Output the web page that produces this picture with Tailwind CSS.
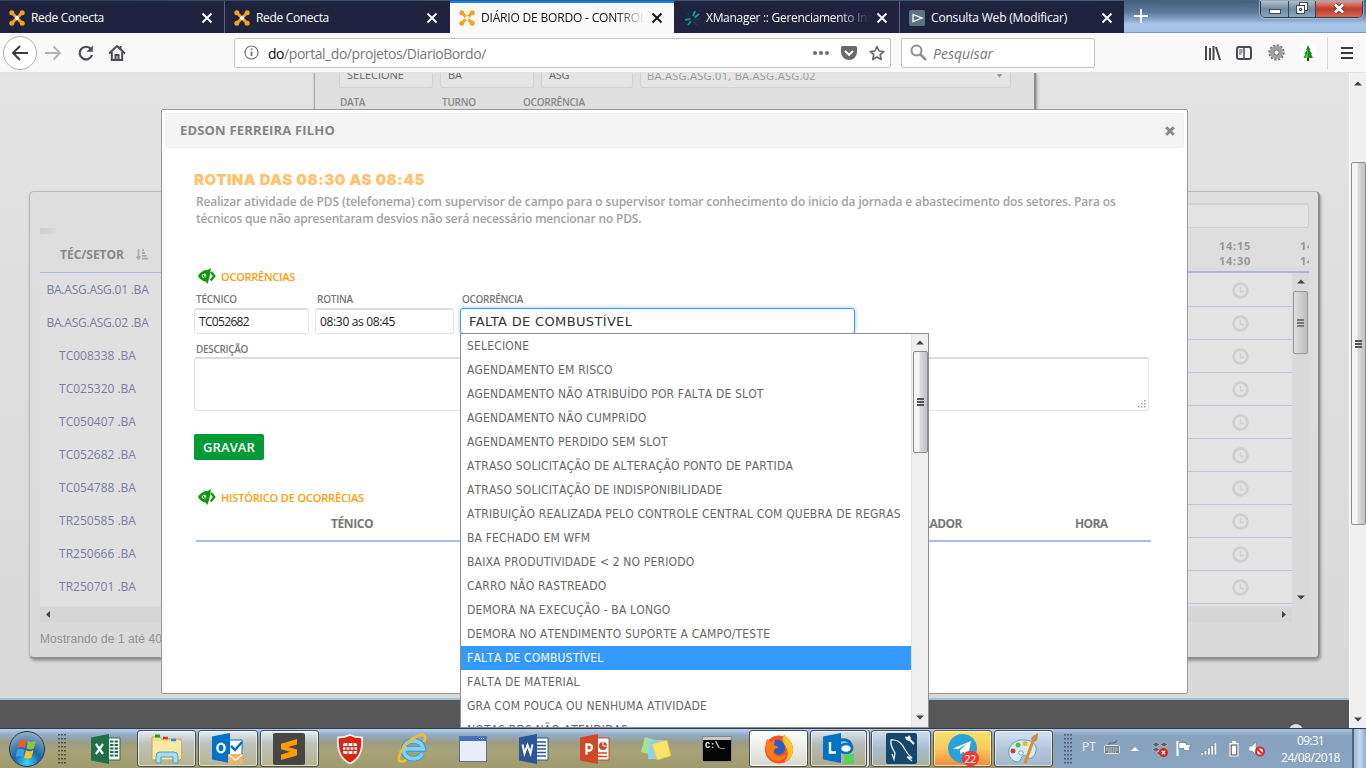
<!DOCTYPE html>
<html lang="pt-BR">
<head>
<meta charset="utf-8">
<title>DIÁRIO DE BORDO - CONTROLE</title>
<script src="https://cdn.jsdelivr.net/npm/@tailwindcss/browser@4"></script>
</head>
<body class="w-[1366px] h-[768px] overflow-hidden flex flex-col font-['Open_Sans',sans-serif] whitespace-nowrap bg-[#f9f9fa]">

<!-- shared symbols -->
<svg class="hidden">
  <symbol id="x" viewBox="0 0 16 16"><path d="M3.500 3.500l9 9M12.500 3.500l-9 9" stroke="currentColor" stroke-width="1.800" fill="none"/></symbol>
  <symbol id="conecta" viewBox="0 0 16 16"><path d="M2.800 2.800l10.400 10.400M13.200 2.800L2.800 13.200" stroke="#f7a11a" stroke-width="3"/><g fill="#f7a11a"><circle cx="2.800" cy="2.800" r="2.500"/><circle cx="13.200" cy="2.800" r="2.500"/><circle cx="2.800" cy="13.200" r="2.500"/><circle cx="13.200" cy="13.200" r="2.500"/></g><circle cx="8" cy="8" r="2" fill="#fff"/></symbol>
  <symbol id="clock" viewBox="0 0 17 17"><circle cx="8.500" cy="8.500" r="7" fill="none" stroke="#cfcfcf" stroke-width="2.600"/><path d="M8.500 5v4.500h3" fill="none" stroke="#cfcfcf" stroke-width="1.400"/></symbol>
  <symbol id="eye" viewBox="0 0 18 16"><path d="M0 8C2.500 3.500 6.500 1.800 9.800 2L13 0 11.500 9 9.500 16 7.800 13.800C4 13 1.500 10.700 0 8z" fill="#0b9a0b"/><path d="M3.800 8c.6-1.800 2-2.600 3.300-2.100s1.600 2.400.5 3.900c-1.600.7-3.100-.1-3.800-1.800z" fill="#fff"/><path d="M5.300 7c.3 2 1.500 2.600 2.700 1.600" stroke="#0b9a0b" stroke-width="1.200" fill="none"/><path d="M13 4l3.300 4L12.700 12.500" stroke="#0b9a0b" stroke-width="2.300" fill="none"/></symbol>
  <symbol id="up" viewBox="0 0 8 5"><path d="M0 4.500L4 .5l4 4z" fill="#444"/></symbol>
  <symbol id="down" viewBox="0 0 8 5"><path d="M0 .5h8l-4 4z" fill="#444"/></symbol>
</svg>

<!-- tab strip -->
<header class="h-[33px] shrink-0 flex pt-px bg-[linear-gradient(90deg,#28405a,#3f5f70_40%,#39566a_60%,#4a6b8a)] text-[12px] text-white relative">
  <div class="w-[225px] bg-[#202340] border-r border-[#5d6073] flex items-center pl-[9px] pt-px"><svg class="size-4"><use href="#conecta"/></svg><span class="ml-1.5 w-[168px] tracking-[-0.33px]">Rede Conecta</span><svg class="size-4"><use href="#x"/></svg></div>
  <div class="w-[225px] bg-[#202340] flex items-center pl-[9px] pt-px"><svg class="size-4"><use href="#conecta"/></svg><span class="ml-1.5 w-[168px] tracking-[-0.33px]">Rede Conecta</span><svg class="size-4"><use href="#x"/></svg></div>
  <div class="w-[224px] bg-[#f9f9fa] border-t-2 border-[#0a84ff] text-[#111] flex items-center pl-[9px]"><svg class="size-4"><use href="#conecta"/></svg><span class="ml-1.5 w-[164px] mr-1 overflow-hidden tracking-[-0.18px] [mask-image:linear-gradient(90deg,#000_82%,transparent)]">DIÁRIO DE BORDO - CONTROLE</span><svg class="size-4"><use href="#x"/></svg></div>
  <div class="w-[226px] bg-[#202340] border-r border-[#5d6073] flex items-center pl-[10px] pt-px"><svg class="size-4" viewBox="0 0 16 16" fill="none" stroke-width="2"><path d="M9 6l2-5M10.500 7.500L15 4" stroke="#14a08c"/><path d="M10 9.500h5.500M9.500 11l3.500 4" stroke="#20384a"/><path d="M6.500 9L1 10M7 11l-3 4" stroke="#178a86"/><path d="M6 6.500L3.500 3" stroke="#20384a"/></svg><span class="ml-1.5 w-[164px] mr-1 overflow-hidden tracking-[-0.3px] [mask-image:linear-gradient(90deg,#000_80%,transparent)]">XManager :: Gerenciamento Integrado</span><svg class="size-4"><use href="#x"/></svg></div>
  <div class="w-[224px] bg-[#202340] flex items-center pl-[9px] pt-px"><svg class="size-4" viewBox="0 0 16 16"><rect width="16" height="16" rx="2" fill="#5c7386"/><path d="M4 4.500v7L13 8z" fill="none" stroke="#fff" stroke-width="1.300"/></svg><span class="ml-1.5 w-[168px] tracking-[-0.18px]">Consulta Web (Modificar)</span><svg class="size-4"><use href="#x"/></svg></div>
  <div class="flex-1 flex justify-between pl-[9px] pr-[3px] bg-[linear-gradient(180deg,#44627f_0%,#5b7899_35%,#86a5c8_60%,#a9c8ea_75%,#a3c3e6_100%)] border-b border-[#7f98b5]">
    <svg class="w-4 h-4 mt-[7px]" viewBox="0 0 16 16"><path d="M8 1v14M1 8h14" stroke="#fff" stroke-width="2"/></svg>
    <div class="flex h-[17px] rounded-b-[5px] border border-t-0 border-[#2b3c50] outline outline-[#c9d6e4]/60 overflow-hidden">
      <div class="w-[28px] bg-[linear-gradient(#aebdcb,#6f8aa3_50%,#8aa7c2)] border-r border-[#34485e] flex justify-center pt-[8px]"><svg class="w-3 h-[5px]" viewBox="0 0 12 5"><rect x=".5" y=".5" width="11" height="4" fill="#fff" stroke="#3c4a5c"/></svg></div>
      <div class="w-[27px] bg-[linear-gradient(#aebdcb,#6f8aa3_50%,#8aa7c2)] border-r border-[#34485e] flex justify-center pt-px"><svg class="w-3 h-3" viewBox="0 0 12 12" fill="#fff" stroke="#3c4a5c"><rect x="3.500" y=".5" width="8" height="8"/><rect x=".5" y="3.500" width="8" height="8"/><path d="M3.500 6.500h2v2h-2z"/></svg></div>
      <div class="w-[46px] bg-[linear-gradient(#dd9a8d,#c03a26_50%,#d8694f)] flex justify-center pt-[2px]"><svg class="w-3 h-[11px]" viewBox="0 0 12 11"><path d="M2 1.500l8 8M10 1.500l-8 8" stroke="#53363a" stroke-width="4.500"/><path d="M2 1.500l8 8M10 1.500l-8 8" stroke="#fff" stroke-width="2.800"/></svg></div>
    </div>
  </div>
</header>

<!-- navigation bar -->
<nav class="h-10 shrink-0 bg-[#f9f9fa] border-b border-[#e1e1e2] flex items-center text-[14px] text-[#4a4a4f]">
  <div class="ml-[3px] size-[34px] rounded-full border border-[#b1b1b3] bg-white flex items-center justify-center"><svg class="size-[18px]" viewBox="0 0 18 18" fill="none" stroke="#3a3a3e" stroke-width="2"><path d="M17 9H2M9 2L2 9l7 7"/></svg></div>
  <svg class="ml-[7px] size-[18px]" viewBox="0 0 18 18" fill="none" stroke="#b4b4b6" stroke-width="2"><path d="M1 9h15M9.500 2.500L16 9l-6.500 6.500"/></svg>
  <svg class="ml-[15px] size-[18px]" viewBox="0 0 18 18" fill="none" stroke="#4a4a4f" stroke-width="2.200"><path d="M14 5.200A6.300 6.300 0 1 0 15 11"/><path d="M15.800 1.500v6.300H9.500z" fill="#4a4a4f" stroke="none"/></svg>
  <svg class="ml-[13px] size-[18px]" viewBox="0 0 18 18" fill="none" stroke="#4a4a4f" stroke-width="2"><path d="M1 9.500L9 2l8 7.500M3.800 8v8h10.400V8"/><path d="M7.500 16v-5h3v5zM12.500 2v3" /></svg>
  <div class="ml-[108px] w-[657px] h-[30px] bg-white border border-[#c4c4c5] rounded-[2px] flex items-center pl-[9px] pr-[5px]">
    <svg class="size-[15px]" viewBox="0 0 15 15" fill="none" stroke="#737377" stroke-width="1.200"><circle cx="7.500" cy="7.500" r="6.500"/><path d="M7.500 6.500v4.500M7.500 3.500v1.600" stroke-width="1.700"/></svg>
    <span class="ml-[9px] mt-[2px] tracking-[-0.45px] text-[#77777a] flex-1"><span class="text-[#0c0c0d]">do</span>/portal_do/projetos/DiarioBordo/</span>
    <svg class="w-4 h-1" viewBox="0 0 16 4" fill="#6a6a6e"><circle cx="2" cy="2" r="2"/><circle cx="8" cy="2" r="2"/><circle cx="14" cy="2" r="2"/></svg>
    <svg class="ml-3 w-4 h-[14px]" viewBox="0 0 16 14"><path d="M1.500 0h13A1.500 1.500 0 0 1 16 1.500V6a8 8 0 0 1-16 0V1.500A1.500 1.500 0 0 1 1.500 0z" fill="#6a6a6e"/><path d="M4 5l4 3.800L12 5" fill="none" stroke="#fff" stroke-width="2"/></svg>
    <svg class="ml-3 size-4" viewBox="0 0 16 16"><path d="M8 1.500l2 4.500 4.800.5-3.600 3.200 1 4.800L8 12l-4.200 2.500 1-4.800L1.200 6.500 6 6z" fill="none" stroke="#6a6a6e" stroke-width="1.700" stroke-linejoin="round"/></svg>
  </div>
  <div class="ml-[10px] w-[194px] h-[30px] bg-white border border-[#c4c4c5] rounded-[2px] flex items-center pl-2">
    <svg class="size-[17px]" viewBox="0 0 17 17" fill="none" stroke="#8d8d90"><circle cx="6.500" cy="6.500" r="5" stroke-width="2"/><path d="M10 10l6 6" stroke-width="2.500"/></svg>
    <span class="ml-[6px] mt-[2px] italic text-[#77777a]">Pesquisar</span>
  </div>
  <svg class="ml-[110px] w-4 h-[14px]" viewBox="0 0 16 14" stroke="#4a4a4f" stroke-width="2" fill="none"><path d="M1 0v14M5 2v12M8.500 0v14M11 1l4 13"/></svg>
  <svg class="ml-[15px] w-4 h-[14px]" viewBox="0 0 16 14" fill="none" stroke="#4a4a4f"><rect x="1" y="1" width="14" height="12" rx="2" stroke-width="2"/><path d="M8 1v12" stroke-width="1.500"/><path d="M3 4h3.500M3 6h3.500M3 8h2.500"/></svg>
  <svg class="ml-4 size-[17px]" viewBox="0 0 17 17" fill="none"><circle cx="8.500" cy="8.500" r="7.200" stroke="#777" stroke-width="2" stroke-dasharray="2.200 1.570"/><circle cx="8.500" cy="8.500" r="4.800" stroke="#a0a0a0" stroke-width="4"/><circle cx="8.500" cy="8.500" r="2.600" stroke="#666"/></svg>
  <svg class="ml-[15px] size-4 bg-white" viewBox="0 0 16 16"><path d="M8 0l2.500 5H9.500l2.500 4H11l2 4H3.500L5.500 9H4.500L7 5H6z" fill="#128a12"/><path d="M8 1v12H4.500l2.500-5z" fill="#2dd32d"/><rect x="7" y="13" width="2" height="3" fill="#5a2d10"/></svg>
  <div class="ml-[11px] w-px h-8 bg-[#d7d7db]"></div>
  <svg class="ml-[13px] w-3 h-3" viewBox="0 0 12 12" stroke="#3a3a3e" stroke-width="2"><path d="M0 1h12M0 6h12M0 11h12"/></svg>
</nav>

<!-- viewport -->
<div class="h-[655px] shrink-0 flex overflow-hidden">
  <main class="w-[1349px] relative overflow-hidden bg-[linear-gradient(180deg,#e3e3e3,#d8d8d8)] flex flex-col">

    <!-- filter panel -->
    <section class="ml-[314px] w-[722px] h-[90px] shrink-0 border-x border-[#a9a9a9] border-r-2 border-r-[#8d8d8d] shadow-[1px_0_3px_rgba(0,0,0,.3)] bg-[#dfdfdf] pl-6 text-[11px] text-[#777]">
      <div class="flex gap-[7px] h-[15px] text-[#666]">
        <div class="w-[94px] h-[15px] border border-t-0 border-[#d2d2d2] rounded-b-[3px] bg-[#e4e4e4] pl-[7px] leading-[3px]">SELECIONE</div>
        <div class="w-[94px] h-[15px] border border-t-0 border-[#d2d2d2] rounded-b-[3px] bg-[#e4e4e4] pl-[7px] leading-[3px]">BA</div>
        <div class="w-[92px] h-[15px] border border-t-0 border-[#d2d2d2] rounded-b-[3px] bg-[#e4e4e4] pl-[7px] leading-[3px] tracking-[-0.2px]">ASG</div>
        <div class="w-[371px] h-[15px] border border-t-0 border-[#d2d2d2] rounded-b-[3px] bg-[#e4e4e4] pl-[6px] pr-2 leading-[5px] text-[#999] tracking-[0.31px] flex justify-between">BA.ASG.ASG.01, BA.ASG.ASG.02<svg class="w-[5px] h-1 mt-px"><path d="M0 0h5L2.500 4z" fill="#999"/></svg></div>
      </div>
      <div class="flex mt-[7px] pl-px text-[10px] font-semibold tracking-[-0.25px] text-[#888]"><span class="w-[102px]">DATA</span><span class="w-[81px]">TURNO</span><span>OCORRÊNCIA</span></div>
    </section>

    <!-- schedule card -->
    <section class="ml-[29px] mt-[28px] w-[1291px] h-[468px] shrink-0 rounded-[5px] border border-[#b9b9b9] border-r-2 border-b-2 border-r-[#8d8d8d] border-b-[#8d8d8d] shadow-[1px_2px_3px_rgba(0,0,0,.3)] bg-[linear-gradient(180deg,#dedede,#dadada)] pl-[10px] pr-[9px] flex flex-col text-[#888]">
      <div class="flex h-[415px]">
        <div class="w-[1000px] flex flex-col">
          <div class="mt-[36px] w-4 h-1.5 bg-[linear-gradient(90deg,#cfcfcf,#d9d9d9)]"></div>
          <div class="h-[39px] mt-0 border-b border-[#a9b6e4] flex items-center pl-5 pt-[3px] text-[12px] font-bold"><span>TÉC/SETOR</span><svg class="ml-3 w-3 h-[11px]" viewBox="0 0 12 11"><path d="M2.500 0v9M.5 7.500L2.500 10l2-2.500" stroke="#aaa" stroke-width="1.600" fill="none"/><path d="M6 1.200h2M6 4h3M6 6.800h4.500M6 9.600h6" stroke="#aaa" stroke-width="1.800"/></svg></div>
          <div id="setores" class="bg-[#e0e0e0] text-[12px] text-[#7b7ba3] w-[122px] h-[333px] flex flex-col"></div>
        </div>
        <div class="flex-1 flex flex-col">
          <div class="mt-[11px] h-[25px] rounded-[3px] border border-[#d0d0d0] border-t-2 bg-[#e3e3e3]"></div>
          <div class="h-[45px] border-b-2 border-[#a9b6e4] pt-[10px] pl-[179px] flex gap-[49px] overflow-hidden text-[11px] leading-[15px] font-bold tracking-[0.74px] text-[#999]"><span>14:15<br>14:30</span><span class="w-[9px] overflow-hidden">14:30<br>14:45</span></div>
          <div class="flex h-[333px]">
            <div id="relogios" class="flex-1 flex flex-col pt-px bg-[#e3e3e3]"></div>
            <div class="w-[17px] bg-[#d9d9d9] flex flex-col items-center pt-[6px]">
              <svg class="w-2 h-[5px]"><use href="#up"/></svg>
              <div class="mt-[7px] w-[15px] h-[63px] border border-[#999] rounded-[2px] bg-[linear-gradient(90deg,#dedede,#bdbdbd)] flex flex-col gap-px items-center justify-center"><i class="w-[7px] h-[2px] bg-[#777]"></i><i class="w-[7px] h-[2px] bg-[#777]"></i><i class="w-[7px] h-[2px] bg-[#777]"></i></div>
              <svg class="mt-[241px] w-2 h-[5px]"><use href="#down"/></svg>
            </div>
          </div>
        </div>
      </div>
      <div class="h-[15px] w-[1252px] bg-[#d6d6d6] flex items-center justify-between pl-1.5 pr-1.5"><svg class="w-1 h-[7px]"><path d="M4 0v7L0 3.500z" fill="#444"/></svg><svg class="w-1 h-[7px]"><path d="M0 0v7l4-3.500z" fill="#444"/></svg></div>
      <div class="mt-2 text-[12px] tracking-[0.09px] font-['Liberation_Sans',sans-serif] text-[#909090]">Mostrando de 1 até 40 de 40 registros</div>
    </section>

    <!-- footer -->
    <footer class="mt-[39px] flex-1 border-t-2 border-[#9dc0d8] bg-[#575757] flex justify-end pr-[46px] pt-[24px]"><div class="size-[14px] rounded-full bg-[#ddd]"></div></footer>

    <!-- modal window -->
    <div class="absolute left-[161px] top-[36px] w-[1027px] h-[585px] border border-[#999] rounded-[2px] bg-white">
      <div class="m-[3px] h-[35px] rounded-[2px] bg-[#f4f4f4] border border-[#f0f0f0] flex items-center justify-between pl-[14px] pr-[8px] text-[13px] font-bold tracking-[0.17px] text-[#858585]"><span>EDSON FERREIRA FILHO</span><svg class="w-[10px] h-[10px]" viewBox="0 0 10 10"><path d="M1.200 1.200l7.600 7.600M8.800 1.200L1.200 8.800" stroke="#888" stroke-width="3"/></svg></div>
      <div class="px-8">
        <h1 class="mt-[21px] h-[22px] leading-[22px] text-[15px] font-black tracking-[0.5px] text-[#fdc36c] font-['Inter',sans-serif]">ROTINA DAS 08:30 AS 08:45</h1>
        <p class="pl-[2px] mt-[2px] text-[12px] leading-[17px] font-semibold text-[#a2a2a2] tracking-[-0.13px]">Realizar atividade de PDS (telefonema) com supervisor de campo para o supervisor tomar conhecimento do inicio da jornada e abastecimento dos setores. Para os<br><span class="tracking-[-0.2px]">técnicos que não apresentaram desvios não será necessário mencionar no PDS.</span></p>
        <h2 class="mt-[41px] h-4 flex items-center gap-[5px] pl-[4px] text-[11px] font-semibold tracking-[-0.25px] text-[#ff9c0a]"><svg class="w-[18px] h-4"><use href="#eye"/></svg><span class="pt-[2px]">OCORRÊNCIAS</span></h2>
        <div class="mt-[9px] flex gap-[6px] text-[12px] text-[#222]">
          <label class="w-[115px]"><span class="block h-[15px] leading-[13px] pl-[2px] text-[10px] font-semibold tracking-[-0.24px] text-[#777]">TÉCNICO</span><span class="flex items-center h-[26px] border border-[#e3e3e3] border-t-2 border-t-[#dcdcdc] rounded-[3px] pl-1 tracking-[-0.67px]">TC052682</span></label>
          <label class="w-[139px]"><span class="block h-[15px] leading-[13px] pl-[2px] text-[10px] font-semibold tracking-[-0.24px] text-[#777]">ROTINA</span><span class="flex items-center h-[26px] border border-[#e3e3e3] border-t-2 border-t-[#dcdcdc] rounded-[3px] pl-1 tracking-[-0.34px]">08:30 as 08:45</span></label>
          <div class="w-[395px] relative"><span class="block h-[15px] leading-[13px] pl-[2px] text-[10px] font-semibold tracking-[-0.33px] text-[#777]">OCORRÊNCIA</span><span class="flex items-center h-[26px] border border-[#3399ff] rounded-[3px] shadow-[0_0_4px_rgba(51,153,255,.55)] pl-2 pt-px text-[13px] tracking-[0.35px] font-['DejaVu_Sans',sans-serif] text-[#333]">FALTA DE COMBUSTÍVEL</span>
            <!-- open list -->
            <div class="absolute z-10 left-0 top-[40px] w-[469px] h-[395px] border border-[#8f8f8f] bg-white flex overflow-hidden">
              <ul id="opcoes" class="w-[450px] h-[393px] overflow-hidden text-[12px] leading-[25px] tracking-[0.17px] [font-kerning:none] text-[#666] font-['DejaVu_Sans_Condensed','DejaVu_Sans',sans-serif] font-stretch-condensed"></ul>
              <div class="w-[17px] bg-[#eee] border-l border-[#e2e2e2] flex flex-col items-center pt-[6px]">
                <svg class="w-2 h-[5px]"><use href="#up"/></svg>
                <div class="mt-[6px] w-[15px] h-[102px] shrink-0 border border-[#8c8c8c] rounded-[2px] bg-[linear-gradient(90deg,#f4f4f4_35%,#d9d9dc_50%,#bfbfc5)] flex flex-col gap-px items-center justify-center"><i class="w-[7px] h-[2px] bg-[#555]"></i><i class="w-[7px] h-[2px] bg-[#555]"></i><i class="w-[7px] h-[2px] bg-[#555]"></i></div>
                <svg class="mt-[262px] w-2 h-[5px]"><use href="#down"/></svg>
              </div>
            </div>
          </div>
        </div>
        <div class="mt-[9px] pl-[2px] h-[14px] leading-[12px] text-[10px] font-semibold tracking-[-0.34px] text-[#777]">DESCRIÇÃO</div>
        <div class="w-[955px] h-[54px] border border-[#e3e3e3] border-t-2 border-t-[#dcdcdc] rounded-[3px] flex items-end justify-end p-[2px]"><svg class="size-2" fill="#999"><path d="M6 0h1.500v1.500H6zM3 3h1.500v1.500H3zM6 3h1.500v1.500H6zM0 6h1.500v1.500H0zM3 6h1.500v1.500H3zM6 6h1.500v1.500H6z"/></svg></div>
        <div class="mt-[23px] w-[70px] h-[26px] rounded-[2px] bg-[#009a36] text-white text-[13px] font-semibold tracking-[0.11px] flex items-center justify-center pt-px">GRAVAR</div>
        <h2 class="mt-[29px] h-4 flex items-center gap-[5px] pl-[4px] text-[11px] font-semibold tracking-[-0.16px] text-[#ff9c0a]"><svg class="w-[18px] h-4"><use href="#eye"/></svg><span class="pt-[2px]">HISTÓRICO DE OCORRÊCIAS</span></h2>
        <div class="ml-[2px] w-[955px] h-[37px] border-b-2 border-[#a9b8fb] flex items-center pt-[2px] text-[12px] font-bold text-[#777]"><span class="w-[569px] pl-[135px] tracking-[-0.43px]">TÉNICO</span><span class="w-[310px] pl-[135px] tracking-[-0.55px]">OPERADOR</span><span class="tracking-[-0.6px]">HORA</span></div>
      </div>
    </div>
  </main>

  <!-- page scrollbar -->
  <aside class="w-[17px] bg-[#f0f0f0] border-l border-white flex flex-col items-center pt-[8px]">
    <svg class="w-2 h-[5px]"><use href="#up"/></svg>
    <div class="mt-[76px] w-[15px] h-[363px] border border-[#8c8c8c] rounded-[2px] bg-[linear-gradient(90deg,#f4f4f4_35%,#d9d9dc_50%,#bfbfc5)] flex flex-col gap-px items-center justify-center"><i class="w-[7px] h-[2px] bg-[#555]"></i><i class="w-[7px] h-[2px] bg-[#555]"></i><i class="w-[7px] h-[2px] bg-[#555]"></i></div>
    <svg class="mt-[192px] w-2 h-[5px]"><use href="#down"/></svg>
  </aside>
</div>

<!-- taskbar -->
<div class="h-10 shrink-0 border-t border-[#2c3b52] flex items-center bg-[linear-gradient(180deg,#b9cfe6_0,#8fabc9_6px,#9d9c86_13px,#a8a377_22px,#a09b6e_100%)] text-white">
  <svg class="ml-2 size-[38px]" viewBox="0 0 38 38"><defs><radialGradient id="orb" cx=".5" cy=".9" r=".85"><stop offset="0" stop-color="#43d4fb"/><stop offset=".45" stop-color="#1668a8"/><stop offset="1" stop-color="#8fa9c0"/></radialGradient></defs><circle cx="19" cy="19" r="17.500" fill="url(#orb)" stroke="#1c3a58"/><path d="M11 11c3-2 5-2 7.500-.5L17 18c-2.500-1.500-5-1.200-7.500.3z" fill="#ee5a2b"/><path d="M20 11c2.500 1.300 5 1.300 8-.3l-2 7.500c-2.500 1.500-5 1.500-7.500.3z" fill="#8cc63f"/><path d="M9 20c2.500-1.600 5-1.800 7.500-.3L15 27c-2.500-1.500-5-1.200-7.500.2z" fill="#3fa0e8"/><path d="M18 20.300c2.500 1.400 5 1.400 7.500-.2l-2 7.300c-2.500 1.500-5 1.500-7.300.3z" fill="#fdc51f"/></svg>
  <svg class="ml-3 w-[8px] h-[30px]" viewBox="0 0 8 30"><path d="M1 0v30M4 0v30M7 0v30" stroke="#3f4238" stroke-width="1.600" stroke-dasharray="1.600 2.400"/></svg>
  <div class="ml-[9px] flex h-full">
    <div class="w-[61.2px] flex items-center justify-center"><svg class="size-[30px]" viewBox="0 0 30 30"><path d="M15 4h14v22H15z" fill="#fff" stroke="#1e7145"/><path d="M19 7.500h8M19 11h8M19 14.500h8M19 18h8M19 21.500h8" stroke="#1e7145" stroke-width="2" stroke-dasharray="3.500 1"/><path d="M0 3.500L18 0v30L0 26.500z" fill="#1e7145"/><path d="M5 10l7 10M12 10L5 20" stroke="#fff" stroke-width="2.200"/></svg></div>
    <div class="w-[61.2px] p-px"><div class="h-full rounded-[3px] border border-[#45505a] bg-[linear-gradient(180deg,#e4ecf4,#bcc3bd_35%,#b9b48c)] shadow-[inset_0_0_0_1px_rgba(255,255,255,.6)] flex items-center justify-center"><svg class="w-8 h-[30px]" viewBox="0 0 32 30"><path d="M1 3h8l2 2h19v21H1z" fill="#f3dc8a" stroke="#c9a94e"/><path d="M2 7h28v18H2z" fill="#f9e9a9"/><path d="M4 2h5" stroke="#2a9a2a" stroke-width="3"/><path d="M12 4h5" stroke="#d33" stroke-width="2.500"/><path d="M20 6h5" stroke="#38e" stroke-width="2.500"/><path d="M5 29v-7q0-4 4-4h14q4 0 4 4v7h-5v-6H10v6z" fill="#a5dcf2" stroke="#4f9fc4"/></svg></div></div>
    <div class="w-[61.2px] p-px"><div class="h-full rounded-[3px] border border-[#45505a] bg-[linear-gradient(180deg,#e4ecf4,#bcc3bd_35%,#b9b48c)] shadow-[inset_0_0_0_1px_rgba(255,255,255,.6)] flex items-center justify-center"><svg class="w-[31px] h-[31px]" viewBox="0 0 31 31"><path d="M17 7h13v15H17z" fill="#fff" stroke="#0072c6"/><path d="M19 13l4 4 7-8" fill="none" stroke="#0072c6" stroke-width="2.500"/><path d="M0 3.500L18 0v30L0 26.500z" fill="#0072c6"/><ellipse cx="9" cy="15" rx="3.600" ry="4.400" fill="none" stroke="#fff" stroke-width="2.400"/><path d="M16 21h15v10H16z" fill="#f0b36c"/><path d="M17 22l6.500 5 6.500-5" stroke="#fff" stroke-width="1.500" fill="none"/></svg></div></div>
    <div class="w-[61.2px] p-px"><div class="h-full rounded-[3px] border border-[#45505a] bg-[linear-gradient(180deg,#e4ecf4,#bcc3bd_35%,#b9b48c)] shadow-[inset_0_0_0_1px_rgba(255,255,255,.6)] flex items-center justify-center"><svg class="w-8 h-8" viewBox="0 0 32 32"><rect width="32" height="32" rx="2" fill="#464646"/><path d="M24 6v5.500L15 14l9 2.500v6L8 27v-5.500l9-2.700-9-2.500v-5.500z" fill="#ff9a00"/></svg></div></div>
    <div class="w-[61.2px] flex items-center justify-center"><svg class="w-[28px] h-[30px]" viewBox="0 0 28 30"><path d="M14 1c4 2 8 2.500 12 2.500C27 16 24 25 14 29.500 4 25 1 16 2 3.500 6 3.500 10 3 14 1z" fill="#d92518" stroke="#eee" stroke-width="1.800"/><rect x="7" y="9" width="14" height="11" rx="2" fill="#fff"/><path d="M7 12.600h14M7 16.300h14M12 9v3.600M17 9v3.600M10 12.600v3.700M14 12.600v3.700M18 12.600v3.700M12 16.300V20M17 16.300V20" stroke="#d92518" stroke-width="1.200"/></svg></div>
    <div class="w-[61.2px] flex items-center justify-center"><svg class="w-[30px] h-[31px]" viewBox="0 0 32 32"><path d="M27 21.500a10.500 9.500 0 1 1 1-5H8" fill="none" stroke="#2f9be0" stroke-width="6"/><path d="M27 21.500a10.500 9.500 0 1 1 1-5H8" fill="none" stroke="#7fd3fa" stroke-width="4"/><path d="M29 9c2-5 1-9-5-7C14 5 3 17 2 26c0 5 4 5 8 2" fill="none" stroke="#f7bd25" stroke-width="2.800"/></svg></div>
    <div class="w-[61.2px] flex items-center justify-center"><svg class="w-[28px] h-[26px]" viewBox="0 0 28 26"><rect x=".5" y=".5" width="27" height="25" fill="#e9edf7" stroke="#5f6f8f"/><path d="M1 1h26v4H1z" fill="#3f70d0"/><path d="M20 2.500h6" stroke="#fff" stroke-dasharray="1 1"/></svg></div>
    <div class="w-[61.2px] flex items-center justify-center"><svg class="size-[30px]" viewBox="0 0 30 30"><path d="M15 4h14v22H15z" fill="#fff" stroke="#2b579a"/><path d="M18 8h9M18 11.500h9M18 15h9M18 18.500h9M18 22h9" stroke="#2b579a" stroke-width="1.700"/><path d="M0 3.500L18 0v30L0 26.500z" fill="#2b579a"/><path d="M3.500 10.500l2 9 3-8.500 3 8.500 2-9" fill="none" stroke="#fff" stroke-width="2"/></svg></div>
    <div class="w-[61.2px] flex items-center justify-center"><svg class="size-[30px]" viewBox="0 0 30 30"><path d="M15 4h14v22H15z" fill="#fff" stroke="#d24726"/><circle cx="23" cy="12" r="4" fill="#d24726"/><path d="M23 8v4h4" stroke="#fff" fill="none"/><path d="M18 19h9M18 22.500h9" stroke="#d24726" stroke-width="1.700"/><path d="M0 3.500L18 0v30L0 26.500z" fill="#d24726"/><path d="M6.500 20.500v-10H9a3 3 0 0 1 0 6H6.500" fill="none" stroke="#fff" stroke-width="2.300"/></svg></div>
    <div class="w-[61.2px] flex items-center justify-center"><svg class="w-[32px] h-[28px]" viewBox="0 0 32 28"><path d="M5 2l13 4-5 14-12-3z" fill="#a6e28d"/><path d="M9 5h14v19H8z" fill="#8fd0f0"/><path d="M12 9l15-4 4 16-14 4z" fill="#fbe36a" stroke="#dcbf3c" stroke-width=".6"/></svg></div>
    <div class="w-[61.2px] flex items-center justify-center"><svg class="w-[30px] h-[26px]" viewBox="0 0 30 26"><rect x=".5" y=".5" width="29" height="25" fill="#050505" stroke="#888"/><path d="M1 1h28v3H1z" fill="#c9c9c9"/><text x="3" y="12" font-family="Liberation Mono" font-weight="bold" font-size="8.500" letter-spacing="-.2" fill="#fff">C:\_</text></svg></div>
    <div class="w-[61.2px] p-px"><div class="h-full rounded-[3px] border border-[#45505a] bg-[linear-gradient(180deg,#fbfcfd,#eef0ee_40%,#d9d8cc)] shadow-[inset_0_0_0_1px_rgba(255,255,255,.8)] flex items-center justify-center"><svg class="w-[30px] h-[31px]" viewBox="0 0 30 31"><circle cx="15" cy="16.500" r="14" fill="#fb4f24"/><path d="M20 1c2 3 9 7 9 16a14 14 0 0 1-9 12c5-5 5-12 0-18-2-3-2-7 0-10z" fill="#fdc926"/><path d="M3 6l4 3 4-2-1 5 4 2-5 5c2 5 9 6 13 2-1 6-7 9-13 6C2 24 0 14 3 6z" fill="#ff7a18"/><path d="M11 7c5-1 10 2 10 8s-5 8-9 6c-2-1-3-3-1-5l4-2-5-2z" fill="#2460c4"/></svg></div></div>
    <div class="w-[61.2px] p-px pr-[3px]"><div class="h-full rounded-[3px] border border-[#45505a] bg-[linear-gradient(180deg,#dbe5ee,#b5bdbb_35%,#aeaa88)] shadow-[inset_0_0_0_1px_rgba(255,255,255,.6),2px_0_0_#dfe3dc,3px_0_0_#45505a] flex items-center justify-center"><svg class="w-[31px] h-[31px]" viewBox="0 0 31 31"><path d="M18 7q9-2 11 8" stroke="#0072c6" stroke-width="3" fill="none"/><ellipse cx="23" cy="15.500" rx="6" ry="4.500" fill="#fff" stroke="#0072c6" stroke-width="2.500"/><path d="M0 3.500L18 0v30L0 26.500z" fill="#0072c6"/><path d="M7 9v10.500h6" fill="none" stroke="#fff" stroke-width="2.400"/><path d="M21 21h10v10H21z" fill="#57d257"/></svg></div></div>
    <div class="w-[61.2px] p-px"><div class="h-full rounded-[3px] border border-[#45505a] bg-[linear-gradient(180deg,#cfdeee,#a6bcd2_50%,#aab0a0)] shadow-[inset_0_0_0_1px_rgba(255,255,255,.6)] flex items-center justify-center"><svg class="w-[31px] h-[31px]" viewBox="0 0 31 31"><rect width="31" height="31" rx="2" fill="#16466b"/><path d="M6 21l2 5 1-6c-2-4-5-7-4-13 6-1 9 2 12 6 3 5 3 7 9 12l-5-1 5 4" stroke="#e8f1f8" stroke-width="1.300" fill="none"/><path d="M22 5l6 6" stroke="#fff" stroke-width="2"/><path d="M19 3.500l3 .5 1-2 2 3-2 3-3-1z" fill="#fff"/></svg></div></div>
    <div class="w-[61.2px] p-px"><div class="h-full rounded-[3px] border border-[#6e5730] bg-[linear-gradient(180deg,#f7e36c,#fbc95c_50%,#ee8c3a)] shadow-[inset_0_0_0_1px_rgba(255,255,255,.7)] flex items-center justify-center relative"><svg class="size-[29px]" viewBox="0 0 29 29"><circle cx="14.500" cy="14.500" r="14.500" fill="#2ba1dc"/><path d="M5 14.500L23 7l-3 14.500-5-3.700-2.500 2.700-.5-4.500 7-6.500-9 5.800z" fill="#fff"/></svg><span class="absolute left-[28px] top-[20px] w-[17px] h-[15px] rounded-full bg-[#ee3a2f] text-[11px] leading-[15px] text-center tracking-[-0.3px]">22</span></div></div>
    <div class="w-[61.2px] p-px"><div class="h-full rounded-[3px] border border-[#45505a] bg-[linear-gradient(180deg,#d3e2f1,#b3c7dc_50%,#a3b8cc)] shadow-[inset_0_0_0_1px_rgba(255,255,255,.6)] flex items-center justify-center"><svg class="w-[32px] h-[31px]" viewBox="0 0 32 31"><path d="M3 24C-2 14 8 6 17 7c9 0 13 5 12 11s-6 10-10 5c-2-2-4 0-5 3-2 5-8 3-11-2z" fill="#d5ecf9" stroke="#5b9cc4"/><circle cx="6" cy="18" r="2.500" fill="#e03b2f"/><circle cx="11" cy="12" r="2.500" fill="#62b832"/><circle cx="18" cy="10.500" r="2.500" fill="#f3b71f"/><circle cx="14" cy="20" r="2.200" fill="#fff" stroke="#5b9cc4"/><path d="M26 8l-8 22" stroke="#e58a2c" stroke-width="3"/><path d="M24 7c0-4 4-5 7-7 0 4 0 8-4 9z" fill="#c48d4c"/></svg></div></div>
  </div>
  <div class="flex-1 h-full flex items-center bg-[linear-gradient(180deg,#aac1db_0,#87a2bf_7px,#8aa5c1_100%)] text-[12px]">
    <svg class="ml-[10px] w-[8px] h-[30px]" viewBox="0 0 8 30"><path d="M1 0v30M4 0v30M7 0v30" stroke="#3f4c5c" stroke-width="1.600" stroke-dasharray="1.600 2.400"/></svg>
    <span class="ml-[10px] mb-[4px] text-[#e9eff6] w-[14px]">PT</span>
    <svg class="ml-[8px] mb-[3px] w-4 h-[14px]" viewBox="0 0 16 14" fill="none" stroke="#e5e5e0"><rect x=".5" y="5.500" width="15" height="8" rx="1" fill="#6f7f8e"/><path d="M2 8h12M2 10h12M4 12h8" stroke-dasharray="1.500 .8"/><path d="M5 5V3h6l2-3" stroke="#59636c"/></svg>
    <svg class="ml-[11px] w-2 h-1" viewBox="0 0 8 4"><path d="M0 4l4-4 4 4z" fill="#fff"/></svg>
    <svg class="ml-[13px] size-4" viewBox="0 0 16 16"><path d="M4 1L0 3.500 4 6l4-2.500zM12 1L8 3.500 12 6l4-2.500zM4 6L0 8.500 4 11l4-2.500zM12 6L8 8.500l4 2.500 4-2.500zM8 9.500L4 12l4 2.500 4-2.500z" fill="#5d6068" stroke="#ddd" stroke-width=".5"/><circle cx="11.500" cy="11.500" r="4.500" fill="#e0201c"/><path d="M9.800 9.800l3.400 3.400M13.200 9.800l-3.400 3.400" stroke="#fff" stroke-width="1.300"/></svg>
    <svg class="ml-[8px] w-4 h-[15px]" viewBox="0 0 16 15"><path d="M1.500 0v15" stroke="#fff" stroke-width="2"/><path d="M3 1.500h7v2h5l-2 3 1 3H8v-2H3z" fill="#fff" stroke="#42566c" stroke-width=".5"/></svg>
    <svg class="ml-[9px] w-4 h-3" viewBox="0 0 16 12" fill="#fff" stroke="#54697f" stroke-width=".5"><path d="M0 9.500h2.500V12H0zM3.300 7.500h2.500V12H3.300zM6.600 5h2.500v7H6.600zM9.900 2.500h2.500V12H9.900zM13.200 0h2.500v12h-2.500z"/></svg>
    <svg class="ml-[12px] w-[10px] h-4" viewBox="0 0 10 16"><path d="M3 0h4v2h2.500v13.500h-9V2H3z" fill="#fff"/><rect x="2.200" y="4" width="5.600" height="10" fill="none" stroke="#445"/></svg>
    <svg class="ml-[10px] size-4" viewBox="0 0 16 16"><path d="M0 5h3l4-4v13l-4-4H0z" fill="#fff" stroke="#54697f" stroke-width=".5"/><circle cx="11" cy="10.500" r="4" fill="#fff" stroke="#e0201c" stroke-width="1.800"/><path d="M8.300 8l5.400 5" stroke="#e0201c" stroke-width="1.800"/></svg>
    <div class="ml-[15px] w-[61px] text-center leading-[17px]"><div class="tracking-[-0.72px]">09:31</div><div class="tracking-[-0.47px]">24/08/2018</div></div>
    <div class="ml-auto w-[14px] h-full border-l-2 border-[#4e6680] bg-[linear-gradient(90deg,#9db9d6,#c7daf0,#8eabca)]"></div>
  </div>
</div>

<script>
const setores = ["BA.ASG.ASG.01 .BA","BA.ASG.ASG.02 .BA","TC008338 .BA","TC025320 .BA","TC050407 .BA","TC052682 .BA","TC054788 .BA","TR250585 .BA","TR250666 .BA","TR250701 .BA"];
document.getElementById('setores').innerHTML = setores.map((s,i)=>`<div class="h-[33px] shrink-0 flex items-center justify-center pr-[7px] pt-px${i<2?' tracking-[-0.23px]':''}">${s}</div>`).join('');
document.getElementById('relogios').innerHTML = setores.map(()=>`<div class="h-[33px] shrink-0 border-b border-[#b9c3e2] flex items-center justify-end pr-[43px]"><svg class="size-[17px]"><use href="#clock"/></svg></div>`).join('');
const opcoes = ["SELECIONE","AGENDAMENTO EM RISCO","AGENDAMENTO NÃO ATRIBUÍDO POR FALTA DE SLOT","AGENDAMENTO NÃO CUMPRIDO","AGENDAMENTO PERDIDO SEM SLOT","ATRASO SOLICITAÇÃO DE ALTERAÇÃO PONTO DE PARTIDA","ATRASO SOLICITAÇÃO DE INDISPONIBILIDADE","ATRIBUIÇÃO REALIZADA PELO CONTROLE CENTRAL COM QUEBRA DE REGRAS","BA FECHADO EM WFM","BAIXA PRODUTIVIDADE &lt; 2 NO PERIODO","CARRO NÃO RASTREADO","DEMORA NA EXECUÇÃO - BA LONGO","DEMORA NO ATENDIMENTO SUPORTE A CAMPO/TESTE","FALTA DE COMBUSTÍVEL","FALTA DE MATERIAL","GRA COM POUCA OU NENHUMA ATIVIDADE","NOTAS BDS NÃO ATENDIDAS"];
document.getElementById('opcoes').innerHTML = opcoes.map((s,i)=>`<li class="h-6 pl-[6px] ${i===13?'bg-[#3399ff] text-white':''}">${s}</li>`).join('');
</script>
</body>
</html>
